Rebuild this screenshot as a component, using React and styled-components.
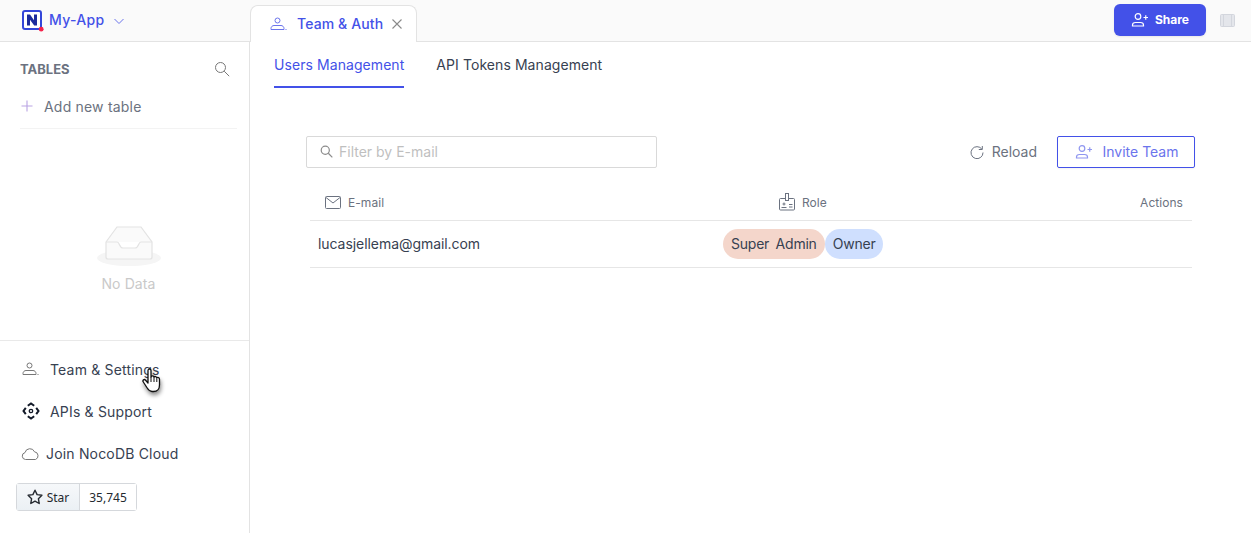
import React from "react";
import styled, { createGlobalStyle } from "styled-components";

const GlobalStyle = createGlobalStyle`
  html, body { margin: 0; padding: 0; background: #fff; }
  body { font-family: Inter, "Liberation Sans", sans-serif; color: #374151; }
  * { box-sizing: border-box; }
`;

const Page = styled.div`
  width: 1251px;
  height: 533px;
  display: flex;
  flex-direction: column;
  overflow: hidden;
  position: relative;
`;

const TopBar = styled.header`
  height: 42px;
  flex: none;
  display: flex;
  background: #fafafa;
  border-bottom: 1px solid #e3e3e3;
`;

const Brand = styled.div`
  width: 250px;
  flex: none;
  display: flex;
  align-items: center;
  padding: 0 0 0 22px;
  height: 41px;
  color: #4351e8;
  font-size: 14px;
  font-weight: 500;
  letter-spacing: 0.3px;
`;

const BrandName = styled.span`
  margin-left: 5px;
  margin-right: 9px;
  padding-bottom: 2px;
`;

const TabStrip = styled.div`
  flex: 1;
  display: flex;
  align-items: flex-end;
  justify-content: space-between;
`;

const WorkTab = styled.div`
  width: 167px;
  height: 37px;
  margin-bottom: -1px;
  display: flex;
  align-items: center;
  padding-left: 19px;
  background: #fff;
  border: 1px solid #e3e3e3;
  border-bottom: none;
  border-radius: 8px 8px 0 0;
  color: #4351e8;
  font-size: 14px;
  font-weight: 500;
`;

const WorkTabLabel = styled.span`
  margin-left: 10px;
  margin-right: 9px;
  white-space: nowrap;
  letter-spacing: 0.12px;
  padding-bottom: 1px;
`;

const TopActions = styled.div`
  align-self: flex-start;
  display: flex;
  align-items: center;
  padding: 4px 0 0 0;
  margin-right: 16px;
  gap: 14px;
`;

const ShareButton = styled.button`
  width: 92px;
  height: 32px;
  display: flex;
  align-items: center;
  justify-content: center;
  gap: 6px;
  padding: 0 0 1px;
  border: none;
  border-radius: 6px;
  background: #4351e8;
  color: #fff;
  font: 700 12px Inter, sans-serif;
  box-shadow: 0 1px 2px rgba(0, 0, 0, 0.08);
`;

const Body = styled.div`
  flex: 1;
  display: flex;
  min-height: 0;
`;

const Sidebar = styled.aside`
  width: 250px;
  flex: none;
  display: flex;
  flex-direction: column;
  border-right: 1px solid #e3e3e3;
`;

const SideTop = styled.div`
  height: 299px;
  flex: none;
  display: flex;
  flex-direction: column;
  padding: 0 12px 0 20px;
  border-bottom: 1px solid #e9e9e9;
`;

const TablesHead = styled.div`
  height: 54px;
  display: flex;
  align-items: center;
  justify-content: space-between;
  padding-right: 7px;
  color: #6b7280;
  font-size: 13px;
  font-weight: 700;
`;

const AddTable = styled.div`
  height: 33px;
  display: flex;
  align-items: center;
  gap: 11px;
  padding: 0 0 12px 1px;
  font-size: 14px;
  letter-spacing: 0.2px;
  color: #6b7280;
  border-bottom: 1px solid #f3f3f3;
`;

const Empty = styled.div`
  flex: 1;
  display: flex;
  flex-direction: column;
  align-items: center;
  padding-top: 96px;
  color: #c9c9c9;
  font-size: 14px;
  letter-spacing: 0.1px;
  gap: 9px;
`;

const SideMenu = styled.nav`
  display: flex;
  flex-direction: column;
  padding: 7px 0 0 16px;
`;

const MenuRow = styled.div`
  height: 42px;
  display: flex;
  align-items: center;
  padding-left: ${(p) => p.$indent}px;
  gap: ${(p) => p.$gap}px;
  color: #374151;
  font-size: 14px;
  letter-spacing: 0.18px;
`;

const GitHubButton = styled.div`
  display: flex;
  width: 121px;
  height: 28px;
  margin-top: 9px;
  border: 1px solid #d5d8dc;
  border-radius: 3px;
  font: 12px "Noto Sans", Inter, sans-serif;
  color: #24292f;
`;

const StarPart = styled.div`
  width: 63px;
  display: flex;
  align-items: center;
  justify-content: center;
  gap: 4px;
  background: linear-gradient(#f6f8fa, #ebf0f4);
  border-right: 1px solid #d5d8dc;
`;

const CountPart = styled.div`
  flex: 1;
  display: flex;
  align-items: center;
  justify-content: center;
  background: #fff;
`;

const Main = styled.main`
  flex: 1;
  min-width: 0;
  display: flex;
  flex-direction: column;
`;

const SubTabs = styled.div`
  height: 46px;
  flex: none;
  display: flex;
  padding-left: 24px;
  gap: 32px;
`;

const SubTab = styled.div`
  height: 46px;
  padding-top: 14px;
  font-size: 14px;
  line-height: 18px;
  letter-spacing: 0.07px;
  color: ${(p) => (p.$active ? "#4351e8" : "#374151")};
  border-bottom: 2px solid ${(p) => (p.$active ? "#4351e8" : "transparent")};
`;

const Content = styled.section`
  padding: 48px 56px 0;
`;

const Toolbar = styled.div`
  display: flex;
  align-items: center;
  justify-content: space-between;
  height: 32px;
`;

const Filter = styled.div`
  width: 351px;
  height: 32px;
  display: flex;
  align-items: center;
  gap: 6px;
  padding: 0 0 1px 13px;
  border: 1px solid #d9d9d9;
  border-radius: 2px;
  color: #bfbfbf;
  font-size: 14px;
`;

const ToolActions = styled.div`
  display: flex;
  align-items: center;
  gap: 20px;
`;

const Reload = styled.div`
  display: flex;
  align-items: center;
  gap: 8px;
  padding-bottom: 1px;
  color: #6b7280;
  font-size: 14px;
`;

const InviteButton = styled.div`
  width: 138px;
  height: 32px;
  display: flex;
  align-items: center;
  justify-content: center;
  gap: 10px;
  padding: 0 0 1px 1px;
  border: 1px solid #4351e8;
  border-radius: 2px;
  color: #6b74ec;
  font-size: 14px;
  box-shadow: 0 1px 2px rgba(0, 0, 0, 0.05);
`;

const Table = styled.div`
  margin: 16px 3px 0 4px;
`;

const Row = styled.div`
  display: grid;
  grid-template-columns: 413px 1fr auto;
  align-items: center;
  height: ${(p) => p.$height}px;
  border-bottom: 1px solid #e6e6e6;
`;

const HeadCell = styled.div`
  display: flex;
  align-items: center;
  gap: ${(p) => p.$gap}px;
  padding-left: ${(p) => p.$pad || 0}px;
  padding-right: ${(p) => p.$right || 0}px;
  font-size: 12px;
  letter-spacing: 0.05px;
  color: #6b7280;
`;

const EmailCell = styled.div`
  padding: 0 0 2px 8px;
  font-size: 14px;
  letter-spacing: -0.06px;
  color: #374151;
`;

const Badges = styled.div`
  display: flex;
`;

const Badge = styled.span`
  height: 30px;
  display: flex;
  align-items: center;
  padding: 0 8px 1px;
  border-radius: 15px;
  font-size: 14px;
  letter-spacing: -0.22px;
  word-spacing: -0.5px;
  color: #374151;
  white-space: pre;
  background: ${(p) => p.$bg};
`;

const Pointer = styled.svg`
  position: absolute;
  left: 142px;
  top: 368px;
  filter: drop-shadow(1px 3px 2px rgba(0, 0, 0, 0.45));
`;

const Logo = () => (
  <svg width="22" height="22" viewBox="0 0 22 22">
    <rect x="1" y="1" width="18" height="18" rx="2" fill="#fff" stroke="#3346d9" strokeWidth="2" />
    <path d="M5 15.500V4.500h3l4 5.700V4.500h3v11h-2.800L8 9.800v5.700z" fill="#1c2b9c" />
    <circle cx="19.200" cy="19.200" r="2.400" fill="#f5234a" />
  </svg>
);

const Chevron = () => (
  <svg width="12" height="12" viewBox="0 0 12 12" fill="none" stroke="#6b74ec" strokeWidth="1">
    <path d="M1.500 4l4.500 4.500L10.500 4" />
  </svg>
);

const UserIcon = ({ color }) => (
  <svg width="17" height="16" viewBox="0 0 17 16" fill="none" stroke={color} strokeWidth="1">
    <circle cx="7.500" cy="4.500" r="2.500" />
    <path d="M1 12.500c0-1.800 1.500-3 3-3h7c1.500 0 3 1.200 3 3v1H1z" />
    <path d="M15.500 13.500h1" />
  </svg>
);

const UserPlusIcon = ({ color, size = 18 }) => (
  <svg width={size} height={size} viewBox="0 0 18 18" fill="none" stroke={color} strokeWidth="1.200">
    <circle cx="7" cy="5.500" r="2.800" />
    <path d="M1.500 15v-1c0-1.500 1.500-2.500 3-2.500h5c1.500 0 3 1 3 2.500v1z" />
    <path d="M12.500 6.500h4.500M14.750 4.250v4.500" />
  </svg>
);

const CloseIcon = () => (
  <svg width="10" height="10" viewBox="0 0 10 10" stroke="#8a8a8a" strokeWidth="1.100">
    <path d="M0.500 0.500l9 9M9.500 0.500l-9 9" />
  </svg>
);

const SearchIcon = ({ color, size, width = 1 }) => (
  <svg width={size} height={size} viewBox="0 0 16 16" fill="none" stroke={color} strokeWidth={width}>
    <circle cx="6.500" cy="6.500" r="5" />
    <path d="M10.200 10.200l5 5" />
  </svg>
);

const PlusIcon = () => (
  <svg width="12" height="12" viewBox="0 0 12 12" stroke="#b9a3e3" strokeWidth="1.100">
    <path d="M0.500 6h11M6 0.500v11" />
  </svg>
);

const EmptyBox = () => (
  <svg width="64" height="41" viewBox="0 0 64 41">
    <ellipse cx="32" cy="33" rx="32" ry="8" fill="#f5f5f5" />
    <path d="M9 17L20 2h24l11 15v15a2 2 0 0 1-2 2H11a2 2 0 0 1-2-2z" fill="#fafafa" stroke="#e3e3e3" strokeWidth="1.200" />
    <path d="M9 17h11c3 0 2 6 6 6h12c4 0 3-6 6-6h11" fill="#fff" stroke="#e3e3e3" strokeWidth="1.200" />
  </svg>
);

const ApiIcon = () => (
  <svg width="18" height="18" viewBox="0 0 18 18" fill="none" stroke="#111827" strokeWidth="2">
    <path d="M5.800 3.800L9 1.500l3.200 2.300M5.800 14.200L9 16.500l3.200-2.300M3.800 5.800L1.500 9l2.300 3.200M14.200 5.800L16.500 9l-2.300 3.200" />
    <circle cx="9" cy="9" r="1.700" strokeWidth="1.300" />
  </svg>
);

const CloudIcon = () => (
  <svg width="19" height="13" viewBox="0 0 19 13" fill="none" stroke="#777" strokeWidth="1">
    <path d="M4.500 12.500a3.500 3.500 0 0 1-.5-6.900 5 5 0 0 1 9.500-.8 4 4 0 0 1 1 7.700z" />
  </svg>
);

const StarIcon = () => (
  <svg width="16" height="16" viewBox="0 0 16 16" fill="none" stroke="#24292f" strokeWidth="1.400" strokeLinejoin="round">
    <path d="M8 1.200l2.100 4.400 4.800.7-3.500 3.400.8 4.800L8 12.200l-4.200 2.300.8-4.800L1.100 6.300l4.800-.7z" />
  </svg>
);

const ReloadIcon = () => (
  <svg width="14" height="14" viewBox="0 0 14 14" fill="none" stroke="#6b7280" strokeWidth="1">
    <path d="M11.900 4.200A6 6 0 1 0 13 7.500" />
    <path d="M12.300 1v3.500H8.800" />
  </svg>
);

const MailIcon = () => (
  <svg width="16" height="13" viewBox="0 0 16 13" fill="none" stroke="#6b7280" strokeWidth="1">
    <rect x="0.500" y="0.500" width="15" height="12" rx="1" />
    <path d="M1 1.500l7 5.500 7-5.500" />
  </svg>
);

const RoleIcon = () => (
  <svg width="16" height="18" viewBox="0 0 16 18" fill="none" stroke="#6b7280" strokeWidth="1">
    <rect x="0.500" y="5.500" width="15" height="11.500" rx="1" />
    <rect x="6.500" y="0.500" width="3" height="7" fill="#fff" />
    <circle cx="5" cy="11" r="1" />
    <path d="M2.500 14.500h5M10 11.500h3.500M10 14h3.500" />
  </svg>
);

const PanelIcon = () => (
  <svg width="15" height="13" viewBox="0 0 15 13" fill="#e4e6eb" stroke="#d3d6dd" strokeWidth="1">
    <rect x="0.500" y="0.500" width="14" height="12" rx="1" />
    <path d="M3.500 1v11M11.500 1v11" />
  </svg>
);

const HandCursor = () => (
  <Pointer width="20" height="26" viewBox="0 0 20 26">
    <path
      d="M6 2.500c0-2 3-2 3 0V9c.5-1.500 3-1.500 3 .3.500-1.300 2.800-1 2.800.7.700-1 2.700-.6 2.700 1.200V17c0 3.500-2 6.500-6 6.500H10c-2.500 0-3.500-1.500-4.800-3.500L1.300 14c-1.200-1.800 1-3.300 2.300-1.800L6 15z"
      fill="#fff"
      stroke="#111"
      strokeWidth="1.300"
      strokeLinejoin="round"
    />
    <path d="M9 9v5M12 9.500V14M14.800 10.500V14" stroke="#111" strokeWidth="1" fill="none" />
  </Pointer>
);

const App = () => (
  <Page>
    <GlobalStyle />
    <TopBar>
      <Brand>
        <Logo />
        <BrandName>My-App</BrandName>
        <Chevron />
      </Brand>
      <TabStrip>
        <WorkTab>
          <UserIcon color="#6b74ec" />
          <WorkTabLabel>Team &amp; Auth</WorkTabLabel>
          <CloseIcon />
        </WorkTab>
        <TopActions>
          <ShareButton>
            <UserPlusIcon color="#fff" />
            Share
          </ShareButton>
          <PanelIcon />
        </TopActions>
      </TabStrip>
    </TopBar>
    <Body>
      <Sidebar>
        <SideTop>
          <TablesHead>
            TABLES
            <SearchIcon color="#777" size={16} />
          </TablesHead>
          <AddTable>
            <PlusIcon />
            Add new table
          </AddTable>
          <Empty>
            <EmptyBox />
            No Data
          </Empty>
        </SideTop>
        <SideMenu>
          <MenuRow $indent={6} $gap={11}>
            <UserIcon color="#777" />
            Team &amp; Settings
          </MenuRow>
          <MenuRow $indent={6} $gap={10}>
            <ApiIcon />
            APIs &amp; Support
          </MenuRow>
          <MenuRow $indent={5} $gap={6}>
            <CloudIcon />
            Join NocoDB Cloud
          </MenuRow>
          <GitHubButton>
            <StarPart>
              <StarIcon />
              Star
            </StarPart>
            <CountPart>35,745</CountPart>
          </GitHubButton>
        </SideMenu>
      </Sidebar>
      <Main>
        <SubTabs>
          <SubTab $active>Users Management</SubTab>
          <SubTab>API Tokens Management</SubTab>
        </SubTabs>
        <Content>
          <Toolbar>
            <Filter>
              <SearchIcon color="#8c8c8c" size={13} width={1.500} />
              Filter by E-mail
            </Filter>
            <ToolActions>
              <Reload>
                <ReloadIcon />
                Reload
              </Reload>
              <InviteButton>
                <UserPlusIcon color="#8f96f0" />
                Invite Team
              </InviteButton>
            </ToolActions>
          </Toolbar>
          <Table>
            <Row $height={37}>
              <HeadCell $pad={15} $gap={7}>
                <MailIcon />
                E-mail
              </HeadCell>
              <HeadCell $pad={56} $gap={7}>
                <RoleIcon />
                Role
              </HeadCell>
              <HeadCell $right={9}>Actions</HeadCell>
            </Row>
            <Row $height={47}>
              <EmailCell>lucasjellema@gmail.com</EmailCell>
              <Badges>
                <Badge $bg="#f4d6cb">{"Super  Admin"}</Badge>
                <Badge $bg="#cfdffe">Owner</Badge>
              </Badges>
              <span />
            </Row>
          </Table>
        </Content>
      </Main>
    </Body>
    <HandCursor />
  </Page>
);

export default App;
